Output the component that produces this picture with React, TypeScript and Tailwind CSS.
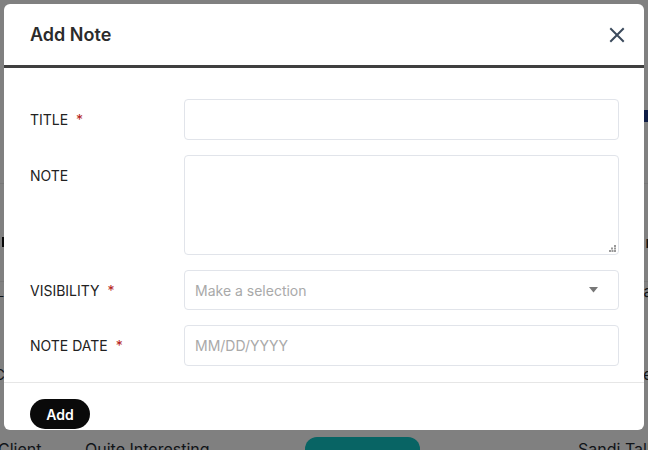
import React from "react";

export default function App() {
  const font = { fontFamily: "Inter, 'Liberation Sans', sans-serif" };
  return (
    <div className="relative h-[450px] w-[648px] overflow-hidden bg-[#808080]" style={font}>
      {/* background page (dimmed by modal backdrop) */}
      <div className="flex h-full flex-col text-[15px] leading-[20px] text-[#111418]">
        <div className="h-[108px] shrink-0" />
        <div className="flex h-[16px] shrink-0 items-center justify-between">
          <span />
          <span className="mr-[-2px] h-[12px] w-[8px] bg-[#0f1d45]" />
        </div>
        <div className="h-[60px] shrink-0 border-b border-[#777]" />
        <div className="h-[48px] shrink-0" />
        <div className="flex h-[20px] shrink-0 items-center justify-between">
          <span className="ml-[2px] h-[10px] w-[4px] bg-[#080808]" />
          <span className="mr-[-4px] text-[16px] font-bold">r</span>
        </div>
        <div className="h-[30px] shrink-0 border-b border-[#777]" />
        <div className="flex h-[20px] shrink-0 items-center justify-between">
          <span className="ml-[-2px] text-[12px]">_</span>
          <span className="mr-[-4px]">a</span>
        </div>
        <div className="h-[63px] shrink-0" />
        <div className="flex h-[20px] shrink-0 items-center justify-between">
          <span className="ml-[-6px]">C</span>
          <span className="mr-[-4px]">e</span>
        </div>
        <div className="h-[52px] shrink-0" />
        <div className="flex h-[24px] shrink-0 items-center text-[16px]">
          <span className="ml-[-2px] w-[87px] shrink-0">Client</span>
          <span className="w-[220px] shrink-0">Quite Interesting</span>
          <span className="h-[24px] w-[115px] shrink-0 rounded-full bg-[#086464]" />
          <span className="ml-[158px] shrink-0 whitespace-nowrap">Sandi Talbot</span>
        </div>
      </div>

      {/* modal */}
      <div className="absolute left-[4px] top-[4px] flex h-[426px] w-[640px] flex-col rounded-[6px] bg-white">
        <div className="flex h-[61px] items-center justify-between pl-[26px] pr-[17px]">
          <h2 className="text-[18px] font-semibold text-[#2b2b2b]">Add Note</h2>
          <svg width="20" height="20" viewBox="0 0 20 20" className="text-[#3b4a5c]">
            <path d="M4 4L16 16M16 4L4 16" stroke="currentColor" strokeWidth="2" strokeLinecap="square" />
          </svg>
        </div>
        <div className="h-[3px] bg-[#3f3f3f]" />
        <div className="flex flex-col gap-[15px] pl-[26px] pr-[25px] pt-[31px] pb-[16px]">
          <div className="flex items-center">
            <label className="w-[154px] text-[14px] font-normal text-[#222]">
              TITLE <span className="ml-[4px] text-[#b42318]">*</span>
            </label>
            <input className="h-[41px] flex-1 rounded-[4px] border border-[#e1e4ea] px-[10px] text-[14px] outline-none" />
          </div>
          <div className="flex items-start">
            <label className="w-[154px] pt-[10px] text-[14px] font-normal text-[#222]">NOTE</label>
            <div className="relative flex h-[100px] flex-1">
              <textarea className="h-full w-full resize-none rounded-[4px] border border-[#e1e4ea] px-[10px] py-[8px] text-[14px] outline-none" />
              <svg width="7" height="7" viewBox="0 0 7 7" className="absolute bottom-[3px] right-[3px]">
                <rect x="5" y="0" width="2" height="2" fill="#999" />
                <rect x="2" y="2.5" width="2" height="2" fill="#999" />
                <rect x="5" y="2.5" width="2" height="2" fill="#999" />
                <rect x="0" y="5" width="2" height="2" fill="#999" />
                <rect x="2.5" y="5" width="2" height="2" fill="#999" />
                <rect x="5" y="5" width="2" height="2" fill="#999" />
              </svg>
            </div>
          </div>
          <div className="flex items-center">
            <label className="w-[154px] text-[14px] font-normal text-[#222]">
              VISIBILITY <span className="ml-[4px] text-[#b42318]">*</span>
            </label>
            <div className="flex h-[40px] flex-1 items-center justify-between rounded-[4px] border border-[#e1e4ea] pl-[10px] pr-[20px] text-[14px] text-[#a9a9a9]">
              <span>Make a selection</span>
              <svg width="9" height="6" viewBox="0 0 9 6">
                <path d="M0 0H9L4.5 5.5Z" fill="#777" />
              </svg>
            </div>
          </div>
          <div className="flex items-center">
            <label className="w-[154px] text-[14px] font-normal text-[#222]">
              NOTE DATE <span className="ml-[4px] text-[#b42318]">*</span>
            </label>
            <div className="flex h-[41px] flex-1 items-center rounded-[4px] border border-[#e1e4ea] px-[10px] text-[14px] text-[#a9a9a9]">
              MM/DD/YYYY
            </div>
          </div>
        </div>
        <div className="h-[1px] bg-[#e6e6e6]" />
        <div className="pl-[26px] pt-[16px]">
          <button className="h-[30px] w-[60px] rounded-full bg-[#0a0a0a] text-[14px] font-semibold text-white">
            Add
          </button>
        </div>
      </div>
    </div>
  );
}
